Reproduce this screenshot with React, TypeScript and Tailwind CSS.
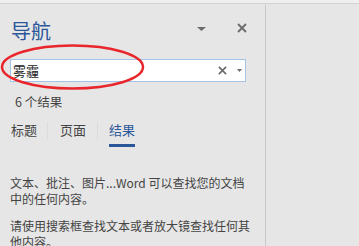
import React from "react";

const font = { fontFamily: '"Noto Sans CJK SC", "Noto Sans", sans-serif' };

function CloseIcon({ size, className }: { size: number; className?: string }) {
  return (
    <svg width={size} height={size} viewBox="0 0 10 10" className={className}>
      <path d="M1 1 L9 9 M9 1 L1 9" stroke="#6b6b6b" strokeWidth="1.8" />
    </svg>
  );
}

function Caret({ w, h }: { w: number; h: number }) {
  return (
    <svg width={w} height={h} viewBox={`0 0 ${w} ${h}`}>
      <path d={`M0 0 L${w} 0 L${w / 2} ${h} Z`} fill="#6b6b6b" />
    </svg>
  );
}

export default function App() {
  return (
    <div
      className="relative w-[359px] h-[246px] overflow-hidden bg-[#e6e6e6] text-[#444]"
      style={font}
    >
      <div className="h-[4px] bg-[#efefef] border-b border-[#d2d2d2]" />
      <div className="flex h-[242px]">
        <div className="w-[266px] border-r border-[#c8c8c8] pl-[10px] pr-[20px] mt-[1px]">
          <div className="flex items-center h-[24px] mt-[14px]">
            <div className="text-[20px] leading-[24px] text-[#2b579a] ml-[1px]">导航</div>
            <div className="flex-1" />
            <div className="mr-[31px] mt-[-4px]">
              <Caret w={9} h={4} />
            </div>
            <div className="mr-[-2px] mt-[-6px]">
              <CloseIcon size={10} />
            </div>
          </div>
          <div className="mt-[16px] h-[23px] w-[236px] bg-white border border-[#a3c3e8] flex items-center pl-[2px] pr-[3px]">
            <span className="text-[13px] leading-[16px] text-[#222]">雾霾</span>
            <div className="flex-1" />
            <CloseIcon size={9} className="mr-[10px]" />
            <Caret w={5} h={3} />
          </div>
          <div className="mt-[12px] ml-[5px] text-[12.5px] leading-[16px]">6 个结果</div>
          <div className="mt-[12px] flex items-start text-[13px] leading-[16px]">
            <div className="ml-[1px] pb-[9px]">标题</div>
            <div className="ml-[10px] w-px h-[18px] bg-[#dcdcdc]" />
            <div className="ml-[12px] pb-[9px]">页面</div>
            <div className="ml-[11px] w-px h-[18px] bg-[#dcdcdc]" />
            <div className="ml-[11px] pb-[6px] border-b-[3px] border-[#2b579a] text-[#2b579a]">结果</div>
          </div>
          <div className="mt-[28px] text-[12px] leading-[15.5px] w-[242px]">
            <p>文本、批注、图片...Word 可以查找您的文档中的任何内容。</p>
            <p className="mt-[12px]">请使用搜索框查找文本或者放大镜查找任何其他内容。</p>
          </div>
        </div>
        <div className="flex-1" />
      </div>
      <svg
        className="absolute left-0 top-0 pointer-events-none"
        width={359}
        height={246}
      >
        <ellipse cx={72.5} cy={67} rx={70.5} ry={21.5} fill="none" stroke="#e8262b" strokeWidth={2.5} />
      </svg>
    </div>
  );
}
